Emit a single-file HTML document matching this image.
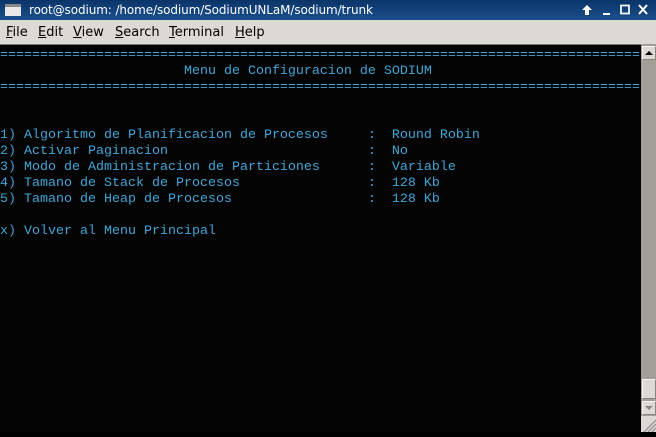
<!DOCTYPE html>
<html><head><meta charset="utf-8"><style>
*{margin:0;padding:0;box-sizing:border-box}
body{width:656px;height:432px;overflow:hidden;background:#000;position:relative;font-family:"Liberation Sans","DejaVu Sans",sans-serif}
#title{position:absolute;left:0;top:0;width:656px;height:20px;background:linear-gradient(#0a3468,#1a4f8c);color:#fff;font-size:13px}
#title .t{position:absolute;left:29px;top:3px;font-family:"DejaVu Sans",sans-serif;font-size:12px;letter-spacing:-0.1px}
#title .ic{position:absolute;left:5px;top:4px;width:16px;height:12px;background:#e8e8e8;border-top:3px solid #888}
#menu{position:absolute;left:0;top:20px;width:656px;height:24px;background:#dcdad5;font-family:"DejaVu Sans",sans-serif;font-size:13px;color:#000}
#menu span{position:absolute;top:5px}
#menu u{text-decoration:underline}
#term{position:absolute;left:0;top:44px;width:641px;height:388px;background:#040404;border-top:1px solid #777}
pre{font-family:"Liberation Mono","DejaVu Sans Mono",monospace;font-size:13.33px;line-height:16px;color:#3ea7d7;white-space:pre;position:absolute;left:0;top:3px;letter-spacing:0}
#sb{position:absolute;left:641px;top:44px;width:15px;height:388px;background:#a39e96}
.btn{position:absolute;left:1px;width:14px;height:14px;background:#dcdad5;border:1px solid #f4f4f2;border-right-color:#8a867f;border-bottom-color:#8a867f}
</style></head><body>
<div id="title"><div class="ic"></div><div class="t">root@sodium: /home/sodium/SodiumUNLaM/sodium/trunk</div>
<svg style="position:absolute;left:580px;top:3px" width="72" height="14"><path d="M7 2 L12 7 H9 V12 H5 V7 H2 Z" fill="#fff"/><rect x="23" y="10" width="7" height="2" fill="#fff"/><rect x="41" y="2.5" width="8" height="8" fill="none" stroke="#fff" stroke-width="1.7"/><path d="M59 2 L67 11 M67 2 L59 11" stroke="#fff" stroke-width="2"/></svg>
</div>
<div id="menu"><span style="left:6px"><u>F</u>ile</span><span style="left:38px"><u>E</u>dit</span><span style="left:73px"><u>V</u>iew</span><span style="left:115px"><u>S</u>earch</span><span style="left:169px"><u>T</u>erminal</span><span style="left:235px"><u>H</u>elp</span></div>
<div id="term"><pre>================================================================================
                       Menu de Configuracion de SODIUM
================================================================================


1) Algoritmo de Planificacion de Procesos     :  Round Robin
2) Activar Paginacion                         :  No
3) Modo de Administracion de Particiones      :  Variable
4) Tamano de Stack de Procesos                :  128 Kb
5) Tamano de Heap de Procesos                 :  128 Kb

x) Volver al Menu Principal</pre></div>
<div id="sb">
<div class="btn" style="top:2px"><svg width="12" height="12" style="position:absolute;left:0;top:0"><path d="M2 8 L6 4 L10 8 Z" fill="#000"/></svg></div>
<div class="btn" style="top:335px;height:20px"></div>
<div class="btn" style="top:357px"><svg width="12" height="12" style="position:absolute;left:0;top:0"><path d="M2 4 L6 8 L10 4 Z" fill="#8a867f"/></svg></div>
<div style="position:absolute;left:0;top:372px;width:15px;height:16px;background:#dcdad5"><svg width="15" height="16"><path d="M3 16 L15 4 M7 16 L15 8 M11 16 L15 12" stroke="#999" stroke-width="1.5"/></svg></div>
</div>
</body></html>
